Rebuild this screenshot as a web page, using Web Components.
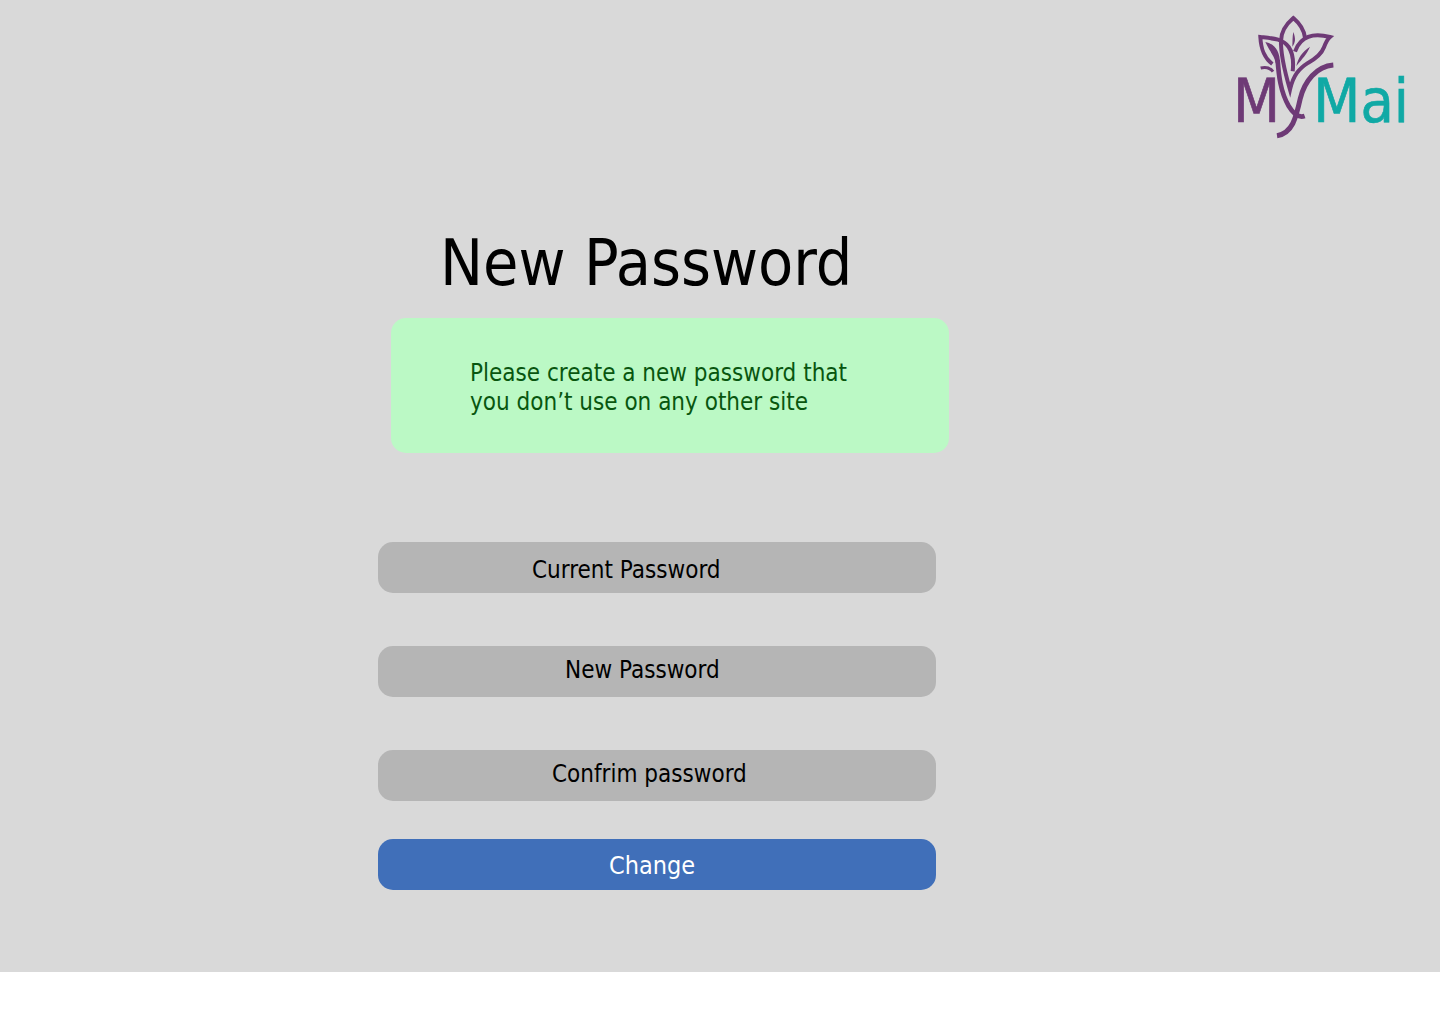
<!DOCTYPE html>
<html lang="en">
<head>
<meta charset="utf-8">
<meta name="viewport" content="width=device-width, initial-scale=1">
<title>New Password</title>
<style>
  body { margin: 0; background: #fff; color: #000; font-family: Tahoma, "DejaVu Sans Condensed", sans-serif; }
</style>
</head>
<body>
<password-page>
  <mymai-logo slot="logo"></mymai-logo>
  <span slot="title">New Password</span>
  <notice-box slot="notice">Please create a new password that<br>you don’t use on any other site</notice-box>
  <password-field label="Current Password" style="--inset:154px"></password-field>
  <password-field label="New Password" style="--inset:187px; --lift:8px"></password-field>
  <password-field label="Confrim password" style="--inset:174px; --lift:8px"></password-field>
  <submit-button slot="action">Change</submit-button>
</password-page>

<script>
class PasswordPage extends HTMLElement {
  constructor() {
    super();
    this.attachShadow({ mode: "open" }).innerHTML = `
      <style>
        :host { display: block; background: #d9d9d9; padding-bottom: 82px; }
        header { display: flex; justify-content: flex-end; padding: 5px 26px 0 0; }
        main { display: grid; grid-template-columns: 378fr minmax(440px, 558fr) 504fr; }
        .column { grid-column: 2; display: flex; flex-direction: column; }
        h1 { margin: 79px 0 16px 62px; font-size: 64px; line-height: 78px; font-weight: 400; white-space: nowrap; }
        .notice { margin: 0 -13px 89px 13px; }
        form { display: flex; flex-direction: column; gap: 38px; }
        .fields { display: flex; flex-direction: column; gap: 53px; }
      </style>
      <header><slot name="logo"></slot></header>
      <main><div class="column">
        <h1><slot name="title"></slot></h1>
        <div class="notice"><slot name="notice"></slot></div>
        <form>
          <div class="fields"><slot></slot></div>
          <slot name="action"></slot>
        </form>
      </div></main>`;
  }
}

class NoticeBox extends HTMLElement {
  constructor() {
    super();
    this.attachShadow({ mode: "open" }).innerHTML = `
      <style>
        :host { display: block; background: #bbf9c5; border-radius: 15px; }
        p { margin: 0; padding: 41px 24px 36px 79px; color: #08560f; font-size: 24px; line-height: 29px; }
      </style>
      <p><slot></slot></p>`;
  }
}

class PasswordField extends HTMLElement {
  connectedCallback() {
    if (this.shadowRoot) return;
    this.attachShadow({ mode: "open" }).innerHTML = `
      <style>
        :host { display: block; }
        input { display: block; box-sizing: border-box; width: 100%; height: 51px; margin: 0; border: 0;
          border-radius: 15px; background: #b5b5b5; color: #000; font: 24px/29px Tahoma, "DejaVu Sans Condensed", sans-serif;
          padding: 4px 16px var(--lift, 0px) var(--inset, 16px); }
        input::placeholder { color: #000; opacity: 1; }
      </style>
      <input type="password">`;
    const input = this.shadowRoot.querySelector("input");
    input.placeholder = this.getAttribute("label");
    input.setAttribute("aria-label", this.getAttribute("label"));
  }
}

class SubmitButton extends HTMLElement {
  constructor() {
    super();
    this.attachShadow({ mode: "open" }).innerHTML = `
      <style>
        :host { display: block; }
        button { display: block; box-sizing: border-box; width: 100%; height: 51px; margin: 0; border: 0;
          border-radius: 15px; background: #406fb9; color: #fff; font: 25px/31px Tahoma, "DejaVu Sans Condensed", sans-serif;
          padding: 2px 10px 0 0; cursor: pointer; }
      </style>
      <button type="button"><slot></slot></button>`;
  }
}

class MymaiLogo extends HTMLElement {
  constructor() {
    super();
    this.attachShadow({ mode: "open" }).innerHTML = `
      <style>
        :host { display: block; }
        svg { display: block; width: 184px; height: 140px; }
        text { font: 182px "DejaVu Sans Condensed", sans-serif; stroke-width: 2; }
      </style>
      <svg viewBox="0 0 552 420" role="img" aria-label="MyMai">
        <text x="9" y="350" fill="#6e3a76" stroke="#6e3a76">M</text>
        <text x="250" y="350" fill="#10a9a5" stroke="#10a9a5">Mai</text>
        <g fill="none" stroke="#6e3a76" stroke-width="12" stroke-miterlimit="8">
          <path d="M153 108C153 79 170 56 190 39C209 55 222 75 225 98"/>
          <path d="M127 177C101 158 93 132 91 96C128 100 158 101 176 126C189 145 191 172 188 199"/>
          <path d="M153 103C151 151 166 206 180 254C190 210 207 191 235 173C259 160 274 148 282 127C287 113 292 103 300 96C261 86 232 90 213 110C204 119 199 128 195 140"/>
          <path d="M310 180C259 184 224 229 211 280C198 339 187 385 141 392" stroke-width="15"/>
          <path d="M143 165C146 210 151 259 176 303C191 328 207 339 224 333" stroke-width="14"/>
          <path d="M92 189C108 185 121 189 129 200" stroke-width="9"/>
        </g>
        <g fill="#6e3a76">
          <path d="M106 111C134 117 150 138 150 175L137 175C133 151 122 145 106 111Z"/>
          <path d="M190 81C198 102 196 113 187 125C188 108 187 96 190 81Z"/>
          <path d="M240 125C230 148 218 160 199 183C204 159 217 140 240 125Z"/>
        </g>
      </svg>`;
  }
}

customElements.define("mymai-logo", MymaiLogo);
customElements.define("notice-box", NoticeBox);
customElements.define("password-field", PasswordField);
customElements.define("submit-button", SubmitButton);
customElements.define("password-page", PasswordPage);
</script>
</body>
</html>
